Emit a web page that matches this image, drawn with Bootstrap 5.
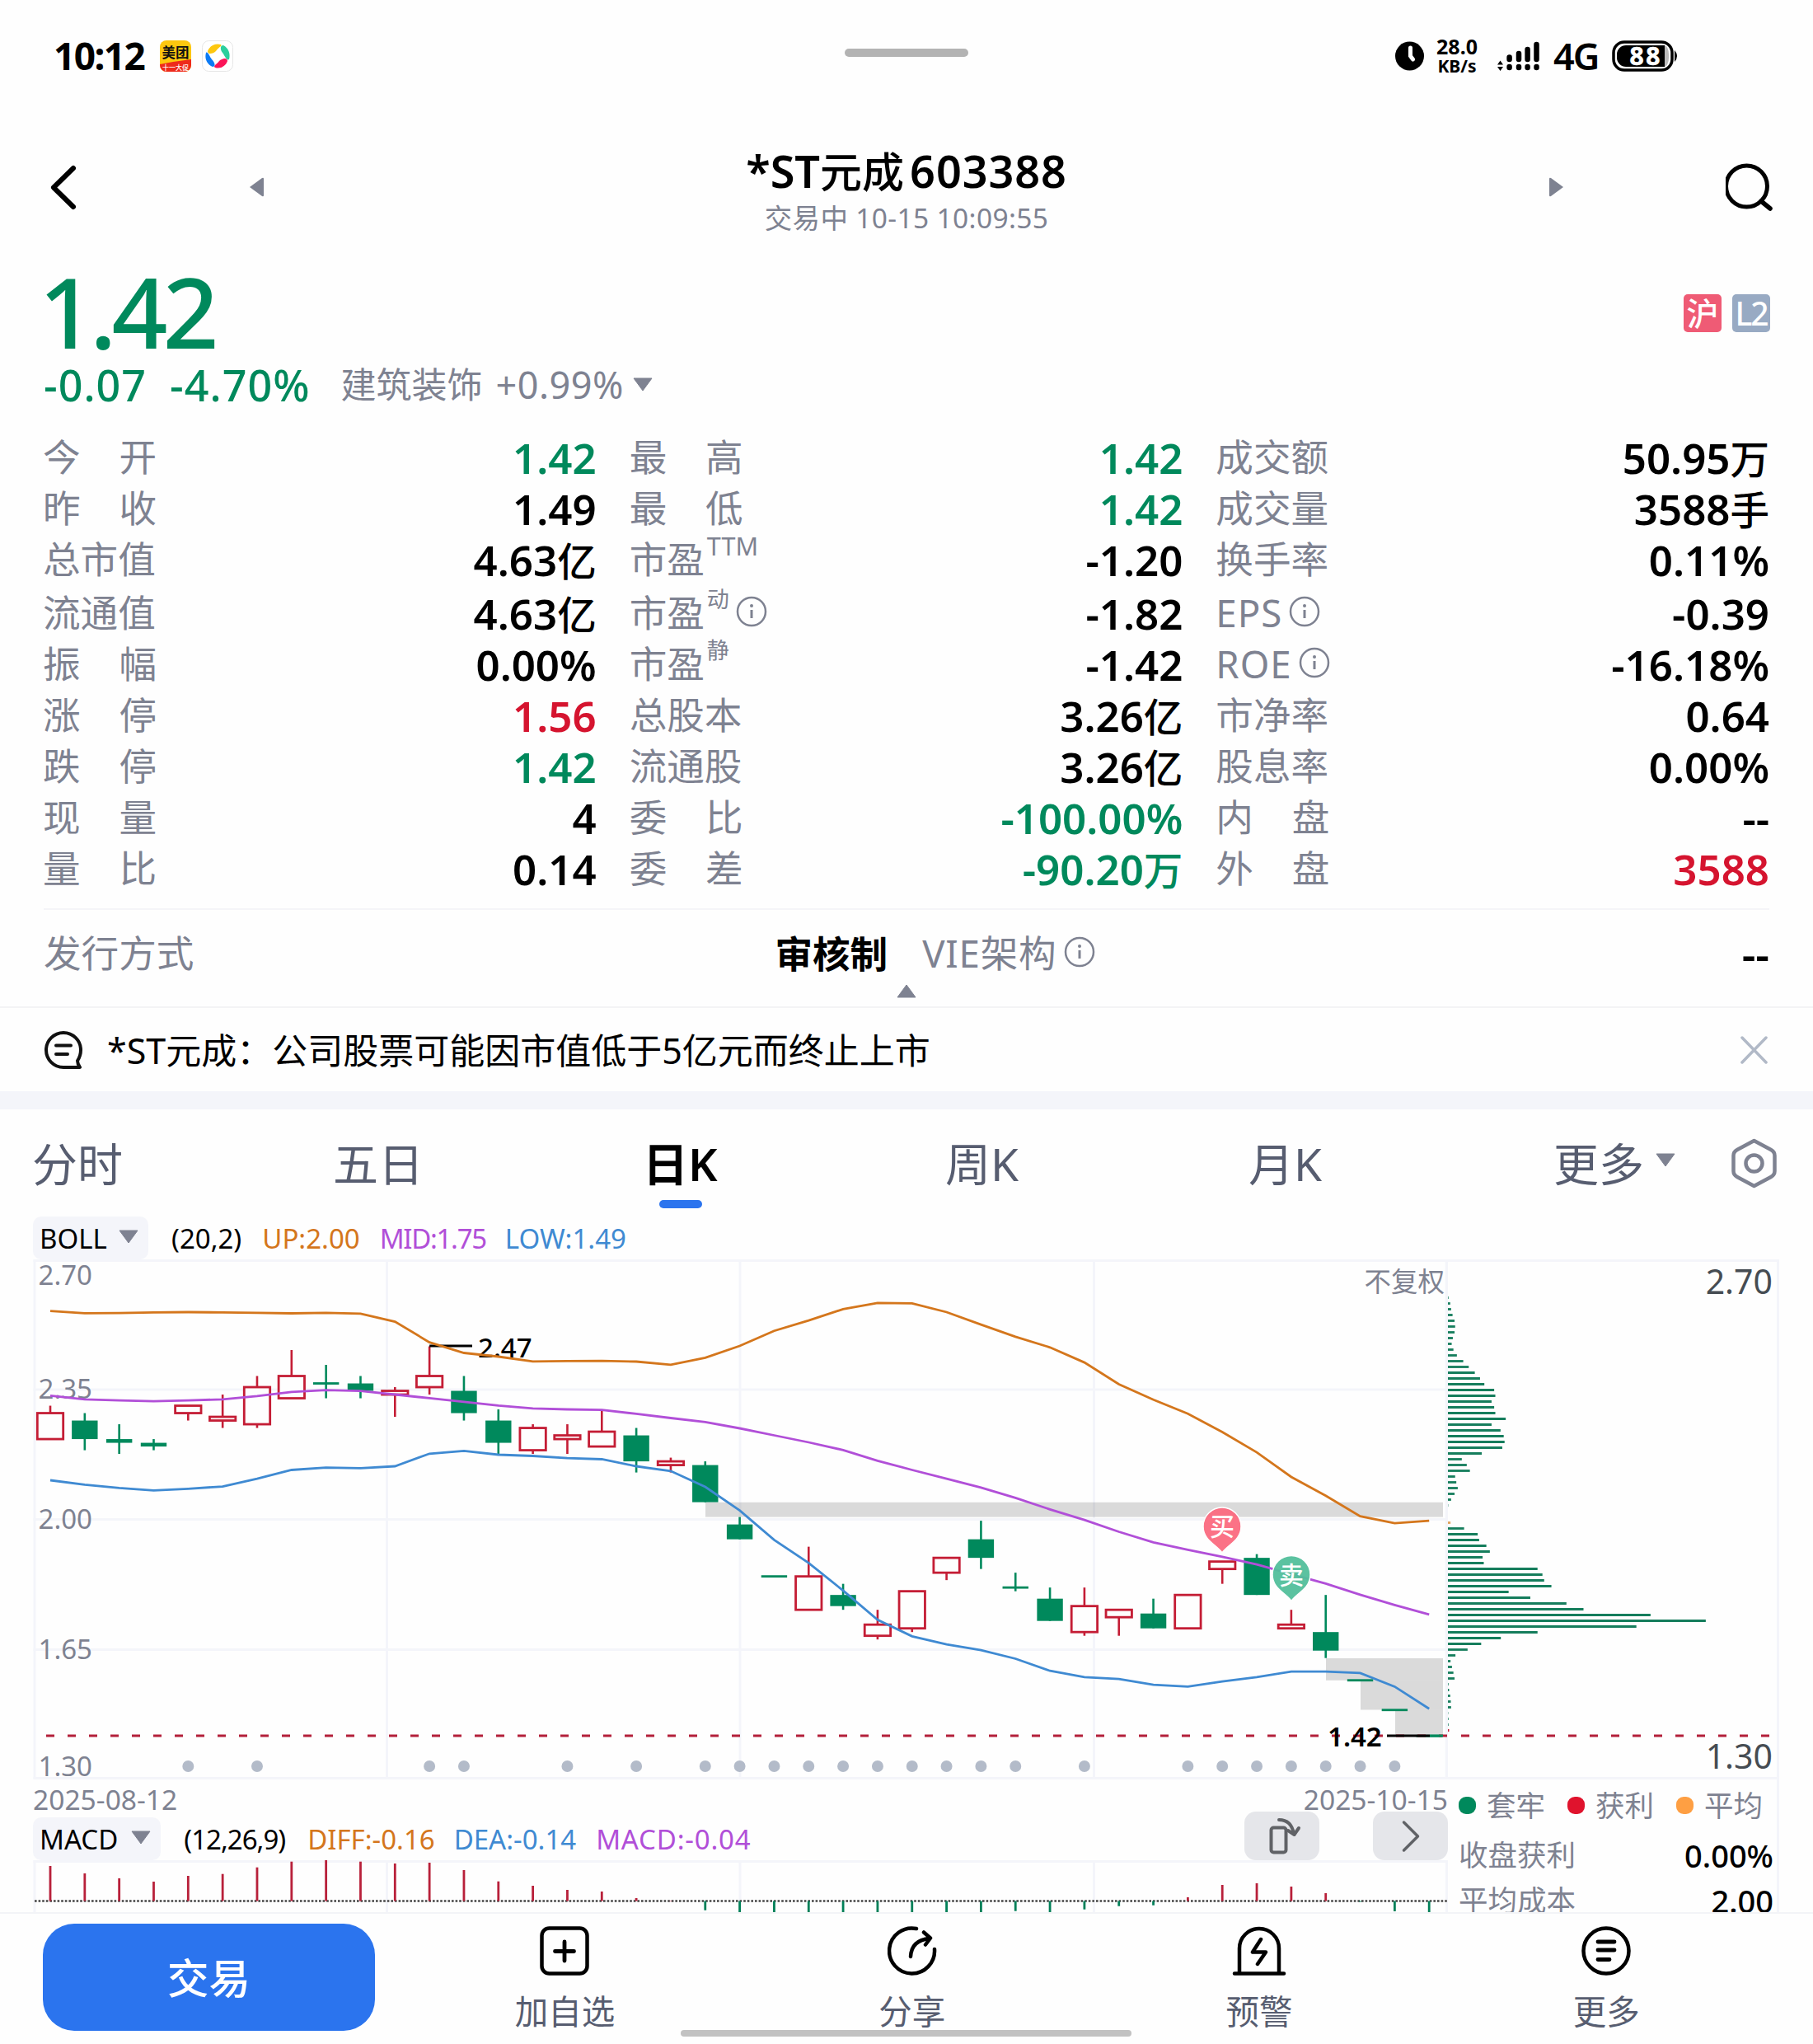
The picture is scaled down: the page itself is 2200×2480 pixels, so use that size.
<!DOCTYPE html>
<html lang="zh-CN">
<head>
<meta charset="utf-8">
<title>*ST元成 603388</title>
<meta name="viewport" content="width=device-width, initial-scale=1">
<link href="https://cdn.jsdelivr.net/npm/bootstrap@5.3.0/dist/css/bootstrap.min.css" rel="stylesheet">
<style>
:root{--gain:#d5142f;--loss:#00895c;--muted:#7e8291;--slate:#575d70;--grid:#f4f5fa}
body{width:2200px;height:2480px;overflow:hidden;background:#fefefe;color:#000;font-family:"Noto Sans","Noto Sans CJK SC",sans-serif;line-height:1}
svg{display:block;flex:none}
.c-muted{color:var(--muted)}.c-loss{color:var(--loss)}.c-gain{color:var(--gain)}.c-slate{color:var(--slate)}
.c-up{color:#d4761c}.c-mid{color:#b14fd8}.c-low{color:#3f8ad2}
.status-bar{height:136px;padding:0 164px 0 65px}
.clock-text{font-size:46px;font-weight:700;letter-spacing:-1.6px;width:129px;padding-bottom:2px}
.grip{width:150px;height:10px;border-radius:5px;background:#b3b3b3;margin-top:-8px}
.side-l{width:960px}.side-r{width:861px}
.net-speed{font-size:25px;font-weight:700;line-height:24px;width:52px;margin-left:14px}
.net-speed .kbs{font-size:21px}
.net-type{font-size:45px;font-weight:600;margin-left:16px;width:55px;letter-spacing:-2px;padding-bottom:2px}
.page-head{height:182px;padding:0 48px 0 55px}
.stock-title{font-size:54px;font-weight:600;line-height:60px;padding-top:4px}
.stock-title .cjk{font-size:51px;font-weight:500}
.stock-title .code{margin-left:7px;letter-spacing:.9px}
.stock-sub{font-size:33.5px;line-height:36px;margin-top:8px;letter-spacing:.35px}
.quote{height:207px;padding:0 52px 0 53px}
.last-price{font-size:119px;font-weight:500;line-height:119px;height:123px;letter-spacing:-6px;margin-left:-6px}
.chg{font-size:52px;font-weight:500;letter-spacing:1px}
.sector{font-size:43px;margin-left:37px}
.sector .pct{font-size:45px;letter-spacing:.5px;margin-left:16px}
.mkt{width:46px;height:46px;border-radius:5px;color:#fff;font-size:39px;font-weight:500;margin-left:13px}
.mkt-sh{background:#ef5b75}.mkt-l2{background:#98aac3;letter-spacing:-2px}
.stats{padding:0 53px;column-gap:41px;height:577px}
.stat-col{flex:1 1 0;min-width:0}
.stat{height:62px;font-size:45.6px}
.stat.tall{height:65px;padding-top:3px}
.stat .lab{padding-bottom:3px;margin-left:-1px}
.stat .val{font-size:51px;font-weight:600;letter-spacing:0;padding-bottom:2px}
.stat .val .cjk{font-size:47.5px;font-weight:500}
.spread{width:138px}
.sup-note{font-size:27px;align-self:flex-start;margin-left:3px;margin-top:-1px}
.sup-note.lat{font-size:30.5px;margin-top:-2px}
.issue{height:119px;margin:0 53px;border-top:2px solid #f5f5f8;font-size:45.6px;padding-bottom:12px}
.issue .mid-col{position:relative;width:400px;margin-left:705px;white-space:nowrap}
.fold{position:absolute;left:148px;top:61px}
.notice{height:103px;border-top:2px solid #f3f3f5;padding:0 54px;font-size:43px}
.band{height:22px;background:#f4f5fa}
.k-tabs{height:130px;padding-left:39px;display:grid;grid-template-columns:365px 376px 367px 368px 370px 215px 60px;align-items:center;font-size:55px;color:var(--slate)}
.k-tabs .on{color:#000;font-weight:600;position:relative}
.k-tabs .on::after{content:"";position:absolute;left:20px;top:72px;width:52px;height:10px;border-radius:5px;background:#2b74ee}
.ind-row{height:52px;font-size:33px}
.ind-row.low{height:59px}
.picker{height:52px;background:#f4f5fa;border-radius:10px;padding:0 12px 0 8px}
.picker svg{margin-top:-4px}
.plot-l{width:1717px;margin-left:40px}
.plot-r{width:402px}
.dates{height:38px;font-size:33.6px;padding-top:7px}
.tool{width:91px;height:59px;border-radius:14px;background:#e5e6ea}
.cost{height:160px;border-right:3px solid var(--grid);padding:0 4px 0 13px;overflow:hidden;font-size:35.5px}
.cost .fig{color:#000;font-size:38px;font-weight:500}
.cost .ln{flex:none}
.pip{width:21px;height:21px;border-radius:9px;margin-right:13px}
.dock{height:161px;border-top:2px solid #f3f4f7;position:relative;padding:12px 40px 0 52px}
.trade{width:403px;height:130px;border-radius:38px;background:#2b74ee;color:#fff;font-size:50.5px;font-weight:500;border:0;padding:2px 0 0;margin-right:20px}
.dock-item{width:421.5px;font-size:40.5px;color:var(--slate)}
.dock-item span{margin-top:24px}
.home-bar{position:absolute;left:826px;top:141px;width:547px;height:8px;border-radius:4px;background:#c2c2c2}
</style>
</head>
<body>
<header class="status-bar d-flex align-items-center">
  <div class="side-l d-flex align-items-center">
    <span class="clock-text">10:12</span>
    <svg width="38" height="38" viewBox="0 0 38 38"><rect width="38" height="38" rx="8" fill="#fdc70f"/><path d="M0 29 L16 26 L38 23 V30 A8 8 0 0 1 30 38 H8 A8 8 0 0 1 0 30Z" fill="#ee2a1b"/><text x="19" y="21" font-size="16.5" font-weight="700" text-anchor="middle" fill="#111">美团</text><text x="19" y="35.500" font-size="8" font-weight="500" text-anchor="middle" fill="#fff">十一大促</text></svg>
    <svg class="ms-2" width="50" height="38" viewBox="-5 0 50 38"><rect x=".5" y=".5" width="37" height="37" rx="8" fill="#fff" stroke="#e6e6e6"/><path d="M7 13C9 7 16 3 23 5C25 7 20 8 17 13C14 16 7 18 7 13Z" fill="#fdc70f"/><path d="M26 6C32 9 35 16 33 23C30 25 28 19 25 15C22 11 22 6 26 6Z" fill="#2ccf9c"/><path d="M31 25C29 31 23 35 16 33C13 31 18 29 21 25C24 22 31 20 31 25Z" fill="#fb1558"/><path d="M13 32C6 29 3 22 5 15C7 13 9 19 12 23C16 27 17 32 13 32Z" fill="#0d7bf5"/></svg>
  </div>
  <div class="grip"></div>
  <div class="side-r d-flex align-items-center justify-content-end">
    <svg width="35" height="36" viewBox="0 0 35 36"><circle cx="17.5" cy="18" r="17.5"/><path d="M18.500 8V18L21.500 22" fill="none" stroke="#fff" stroke-width="5" stroke-linecap="round"/></svg>
    <div class="net-speed text-center"><div>28.0</div><div class="kbs">KB/s</div></div>
    <svg style="margin-left:23px" width="52" height="38" viewBox="1817 49 52 38"><path d="M1820.500 73.500L1824 78.500H1817ZM1820.500 86L1824 81H1817Z"/><path d="M1831.6 69.500V72M1843 65V72M1853.6 60V72M1864.500 54V72M1831.600 81V82M1843 81V82M1853.600 81V82M1864.500 81V82" stroke="#000" stroke-width="6.500" stroke-linecap="round"/></svg>
    <span class="net-type">4G</span>
    <svg style="margin-left:16px" width="80" height="38" viewBox="1956 49 80 38"><rect x="1958" y="51" width="71" height="34" rx="13" fill="#fff" stroke="#000" stroke-width="3.500"/><path d="M1973 55H2020V81H1973A11 11 0 0 1 1962 70V66A11 11 0 0 1 1973 55Z"/><path d="M2020 55A6 11 0 0 1 2025 66V70A6 11 0 0 1 2020 81Z" fill="#bbb"/><path d="M2032 61Q2038 68 2032 75Z"/><text x="1996" y="78.500" font-size="30" font-weight="700" fill="#fff" stroke="#fff" stroke-width=".6" text-anchor="middle" textLength="37">88</text></svg>
  </div>
</header>

<nav class="page-head d-flex justify-content-between align-items-center">
  <div class="d-flex align-items-center">
    <svg width="44" height="64" viewBox="55 195 44 64"><path d="M89 204L65 227.500L89 251" fill="none" stroke="#000" stroke-width="6" stroke-linecap="round" stroke-linejoin="round"/></svg>
    <svg style="margin-left:204px" width="17" height="24"><path d="M0 12L15 1Q17 0 17 2V22Q17 24 15 23Z" fill="#7e8291"/></svg>
  </div>
  <div class="text-center">
    <div class="stock-title">*ST<span class="cjk">元成</span><span class="code">603388</span></div>
    <div class="stock-sub c-muted">交易中 10-15 10:09:55</div>
  </div>
  <div class="d-flex align-items-center">
    <svg style="margin-right:197px" width="17" height="24"><path d="M17 12L2 1Q0 0 0 2V22Q0 24 2 23Z" fill="#7e8291"/></svg>
    <svg width="58" height="58" viewBox="2094 198 58 58"><circle cx="2119.500" cy="226" r="25" fill="none" stroke="#000" stroke-width="5"/><path d="M2137 244L2148 253" stroke="#000" stroke-width="5.500" stroke-linecap="round"/></svg>
  </div>
</nav>

<section class="quote">
  <div class="d-flex justify-content-between align-items-center">
    <div class="last-price c-loss">1.42</div>
    <div class="d-flex"><div class="mkt mkt-sh d-flex align-items-center justify-content-center">沪</div><div class="mkt mkt-l2 d-flex align-items-center justify-content-center">L2</div></div>
  </div>
  <div class="d-flex align-items-center" style="height:51px">
    <span class="chg c-loss">-0.07</span><span class="chg c-loss ms-4 ps-1">-4.70%</span>
    <span class="sector c-muted d-flex align-items-center">建筑装饰<span class="pct">+0.99%</span></span>
    <svg style="margin-left:11px" width="24" height="17"><path d="M1 1H23L12 16Z" fill="#7e8291" stroke="#7e8291" stroke-linejoin="round"/></svg>
  </div>
</section>

<section class="stats d-flex" id="stats"></section>

<section class="issue d-flex align-items-center">
  <span class="c-muted">发行方式</span>
  <div class="mid-col d-flex align-items-center"><b style="font-weight:700;padding-top:2px">审核制</b><span class="c-muted" style="margin-left:42px;letter-spacing:.8px">VIE架构</span><svg style="margin:-4px 0 0 8px" width="38" height="38" viewBox="0 0 38 38"><use href="#info"/></svg>
    <svg class="fold" width="24" height="17"><path d="M12 1L23 16H1Z" fill="#7e8291" stroke="#7e8291" stroke-linejoin="round"/></svg></div>
  <span class="ms-auto" style="font-size:52px;font-weight:600">--</span>
</section>

<section class="notice d-flex align-items-center">
  <svg width="46" height="48" viewBox="0 0 46 48"><path d="M43 45H23A21 21 0 1 1 44 24Q44 31 40 37Q40 41 43 45Z" fill="none" stroke="#111" stroke-width="4" stroke-linejoin="round"/><path d="M14 18.500H32M14 29H28" stroke="#111" stroke-width="4" stroke-linecap="round"/></svg>
  <span style="margin-left:30px;padding-top:1px">*ST元成：公司股票可能因市值低于5亿元而终止上市</span>
  <svg class="ms-auto" width="34" height="34"><path d="M2 2L31 32M31 2L2 32" stroke="#b1b9c7" stroke-width="3.500" stroke-linecap="round"/></svg>
</section>
<div class="band"></div>

<nav class="k-tabs">
  <span>分时</span><span>五日</span><span class="on">日K</span><span>周K</span><span>月K</span>
  <span class="d-flex align-items-center">更多<svg style="margin:-8px 0 0 14px" width="24" height="17"><path d="M1 1H23L12 16Z" fill="#7e8291" stroke="#7e8291" stroke-linejoin="round"/></svg></span>
  <svg width="58" height="62" viewBox="2100 1380 58 62"><path d="M2128.500 1384L2149 1395Q2153.500 1397.500 2153.500 1402V1421Q2153.500 1425.500 2149 1428L2128.500 1439L2108 1428Q2103.500 1425.500 2103.500 1421V1402Q2103.500 1397.500 2108 1395Z" fill="none" stroke="#7e8291" stroke-width="4.500" stroke-linejoin="round"/><circle cx="2128.500" cy="1411.500" r="10" fill="none" stroke="#7e8291" stroke-width="4.500"/></svg>
</nav>

<main class="d-flex align-items-end">
  <div class="plot-l">
    <div class="ind-row d-flex align-items-center">
      <div class="picker d-flex align-items-center" style="width:140px">BOLL<svg style="margin-left:14px" width="24" height="17"><path d="M1 1H23L12 16Z" fill="#7e8291" stroke="#7e8291" stroke-linejoin="round"/></svg></div>
      <span style="margin-left:28px">(20,2)</span><span class="c-up" style="margin-left:25px">UP:2.00</span><span class="c-mid" style="margin-left:24px;letter-spacing:-1.3px">MID:1.75</span><span class="c-low" style="margin-left:23px">LOW:1.49</span>
    </div>
    <svg id="kline" width="1717" height="632" viewBox="40 1528 1717 632"></svg>
    <div class="dates d-flex justify-content-between c-muted"><span>2025-08-12</span><span>2025-10-15</span></div>
    <div class="ind-row low d-flex align-items-end">
      <div class="picker d-flex align-items-center">MACD<svg class="ms-3" width="24" height="17"><path d="M1 1H23L12 16Z" fill="#7e8291" stroke="#7e8291" stroke-linejoin="round"/></svg></div>
      <div class="d-flex align-items-center" style="height:52px"><span style="margin-left:28px;letter-spacing:-1px">(12,26,9)</span><span class="c-up" style="margin-left:27px">DIFF:-0.16</span><span class="c-low" style="margin-left:23px">DEA:-0.14</span><span class="c-mid" style="margin-left:24px;letter-spacing:.8px">MACD:-0.04</span></div>
      <div class="tool ms-auto"><svg width="91" height="59" viewBox="1510 2198 91 59"><g fill="none" stroke="#606266" stroke-width="4" stroke-linecap="round" stroke-linejoin="round"><rect x="1542.500" y="2217.500" width="18" height="30" rx="3"/><path d="M1552 2208Q1567 2208 1570 2225M1563 2221L1570.500 2226L1576 2218"/></g></svg></div>
      <div class="tool" style="margin-left:65px"><svg width="91" height="59" viewBox="1666 2198 91 59"><path d="M1703.500 2211L1720.500 2228L1703.500 2245" fill="none" stroke="#606266" stroke-width="3.500" stroke-linecap="round" stroke-linejoin="round"/></svg></div>
    </div>
    <svg id="macd" width="1717" height="63" viewBox="40 2257 1717 63"></svg>
  </div>
  <div class="plot-r">
    <svg id="chips" width="402" height="632" viewBox="1757 1528 402 632"></svg>
    <div class="cost d-flex flex-column c-muted">
      <div class="ln d-flex align-items-center" style="height:61px"><i class="pip" style="background:#00895c"></i>套牢<i class="pip" style="background:#e0132d;margin-left:27px"></i>获利<i class="pip" style="background:#fe9f43;margin-left:27px"></i>平均</div>
      <div class="ln d-flex align-items-center justify-content-between" style="height:60px"><span>收盘获利</span><span class="fig">0.00%</span></div>
      <div class="ln d-flex align-items-center justify-content-between" style="height:49px"><span>平均成本</span><span class="fig">2.00</span></div>
    </div>
  </div>
</main>

<footer class="dock d-flex align-items-start">
  <button class="trade btn">交易</button>
  <div class="dock-item d-flex flex-column align-items-center"><svg style="margin-top:3px" width="60" height="60" viewBox="0 0 60 60"><rect x="2.500" y="2.500" width="55" height="55" rx="9" fill="none" stroke="#000" stroke-width="4.500"/><path d="M30 19V42M18.500 30.500H41.500" stroke="#000" stroke-width="4.800" stroke-linecap="round"/></svg><span>加自选</span></div>
  <div class="dock-item d-flex flex-column align-items-center"><svg style="margin-top:3px" width="60" height="60" viewBox="0 0 60 60"><path d="M35 3A27.500 27.500 0 1 0 57 28M28 37Q29 17 51 15M44 7.500L52 14.500L46 22.500" fill="none" stroke="#000" stroke-width="4.500" stroke-linecap="round" stroke-linejoin="round"/></svg><span>分享</span></div>
  <div class="dock-item d-flex flex-column align-items-center"><svg style="margin-top:3px" width="66" height="60" viewBox="0 0 66 60"><path d="M9 56V27A24 24 0 0 1 57 27V56M3 57.500H63" fill="none" stroke="#000" stroke-width="4.500" stroke-linecap="round"/><path d="M35 16L25 31.500H41L31 46" fill="none" stroke="#000" stroke-width="4.500" stroke-linecap="round" stroke-linejoin="round"/></svg><span>预警</span></div>
  <div class="dock-item d-flex flex-column align-items-center"><svg style="margin-top:3px" width="60" height="60" viewBox="0 0 60 60"><circle cx="30" cy="30" r="27.500" fill="none" stroke="#000" stroke-width="4.500"/><path d="M20 19H40M20 29H40M20 40.500H34" stroke="#000" stroke-width="4.800" stroke-linecap="round"/></svg><span>更多</span></div>
  <div class="home-bar"></div>
</footer>

<svg width="0" height="0" class="position-absolute"><defs><g id="info"><circle cx="19" cy="19" r="17" fill="none" stroke="#7e8291" stroke-width="2.500"/><path d="M19 17V27" stroke="#7e8291" stroke-width="3"/><circle cx="19" cy="12" r="2" fill="#7e8291"/></g></defs></svg>

<script src="https://cdn.jsdelivr.net/npm/bootstrap@5.3.0/dist/js/bootstrap.bundle.min.js"></script>
<script>
// label | note | info icon | value | tone
const stats = [
  [['今 开','','','1.42','loss'],['昨 收','','','1.49'],['总市值','','','4.63亿'],['流通值','','','4.63亿'],['振 幅','','','0.00%'],['涨 停','','','1.56','gain'],['跌 停','','','1.42','loss'],['现 量','','','4'],['量 比','','','0.14']],
  [['最 高','','','1.42','loss'],['最 低','','','1.42','loss'],['市盈','TTM','','-1.20'],['市盈','动',1,'-1.82'],['市盈','静','','-1.42'],['总股本','','','3.26亿'],['流通股','','','3.26亿'],['委 比','','','-100.00%','loss'],['委 差','','','-90.20万','loss']],
  [['成交额','','','50.95万'],['成交量','','','3588手'],['换手率','','','0.11%'],['EPS','',1,'-0.39'],['ROE','',1,'-16.18%'],['市净率','','','0.64'],['股息率','','','0.00%'],['内 盘','','','--'],['外 盘','','','3588','gain']]
];
document.getElementById('stats').innerHTML = stats.map(col => '<div class="stat-col">' + col.map((r, i) => {
  const lab = r[0].includes(' ') ? `<span class="spread d-flex justify-content-between">${r[0].split(' ').map(c => `<span>${c}</span>`).join('')}</span>` : `<span${/[A-Z]/.test(r[0]) ? ' style="letter-spacing:1px"' : ''}>${r[0]}</span>`;
  const note = r[1] ? `<span class="sup-note${r[1] === 'TTM' ? ' lat' : ''}">${r[1]}</span>` : '';
  const info = r[2] ? `<svg style="margin:-4px 0 0 8px" width="38" height="38"><use href="#info"/></svg>` : '';
  const val = r[3].replace(/[亿万手]/, m => `<span class="cjk">${m}</span>`);
  return `<div class="stat d-flex align-items-center${i === 3 ? ' tall' : ''}"><div class="lab c-muted d-flex align-items-center h-100">${lab}${note}${info}</div><span class="val ms-auto ${r[4] ? 'c-' + r[4] : ''}">${val}</span></div>`;
}).join('') + '</div>').join('');

const X = i => 61 + 41.83 * i;
const Y = c => 1633.5 + (247 - c) * 4.5025;      // price in cents
const Z = v => 1500 + v / 2.24;                  // indicator curve units
const RED = '#c41d35', GREEN = '#00895c';
const line = (x1, y1, x2, y2, s, w, extra = '') => `<line x1="${x1}" y1="${y1}" x2="${x2}" y2="${y2}" stroke="${s}" stroke-width="${w}" ${extra}/>`;
const txt = (x, y, t, size, fill, extra = '') => `<text x="${x}" y="${y}" font-size="${size}" fill="${fill}" ${extra}>${t}</text>`;

// up/down, high, body top, body bottom, low
const candles = [['r',231,229,222,222],['g',229,227,222,219],['g',226,222,221,218],['g',222,221,220,219],['r',231,231,229,227],['r',234,228,227,225],['r',239,236,226,225],['r',246,239,233,233],['g',242,237,237,233],['g',239,237,235,233],['r',236,235,234,228],['r',247,239,236,234],['g',239,235,229,227],['g',230,227,221,218],['r',226,225,219,218],['r',226,223,222,218],['r',230,224,220,220],['g',225,223,216,213],['r',217,216,215,213],['g',216,215,205,205],['g',201,199,195,195],['g',185,185,185,185],['r',193,185,176,176],['g',183,180,177,176],['r',176,172,169,168],['r',181,181,171,170],['r',190,190,186,184],['g',200,195,190,187],['g',186,182,182,181],['g',182,179,173,173],['r',182,177,170,169],['r',176,176,174,169],['g',179,175,171,171],['r',180,180,171,171],['r',189,189,187,183],['g',191,190,180,180],['r',176,172,171,171],['g',180,170,165,163],['g',157,157,157,157],['g',149,149,149,149],['g',142,142,142,142]];
const up = [203,209,208.5,207,206,207,208,209.5,208,210,232,288,317,327,340,339,338.5,340.5,349,330,298,257,229,198,181,182,206,240,273,302,343,402,444,482,532,587,654,705,761,780,773];
const mid = [433,443,446,448.5,446,443,434,423,418,420.5,430,440,450,460,468,470.5,472,482.5,494,505,522,541,560,581,610,635,659,683,711,742,771,803,832,852,871,892,918,944,974,1002,1028];
const low = [663,675,684,690.5,686,680,659,635,628.5,630,625,591,583,593.5,597,603,606,625,638,681,745,825,888,963,1042,1087,1109,1125,1148,1181,1198,1203,1219,1224,1210,1198,1183,1183,1187,1224,1284];
const events = [4,6,11,12,15,17,19,20,21,22,23,24,25,26,27,28,30,33,34,35,36,37,38,39];
const curve = (a, s) => `<polyline points="${a.map((v, i) => X(i).toFixed(1) + ',' + Z(v).toFixed(1)).join(' ')}" fill="none" stroke="${s}" stroke-width="2.8"/>`;
const pin = (x, y, c, t) => `<path d="M${x} ${y + 55}C${x - 7} ${y + 45} ${x - 23} ${y + 40} ${x - 23} ${y + 23}A23 23 0 0 1 ${x + 23} ${y + 23}C${x + 23} ${y + 40} ${x + 7} ${y + 45} ${x} ${y + 55}Z" fill="${c}" fill-opacity=".95" stroke="#fff" stroke-width="1.5"/>` + txt(x, y + 34, t, 30, '#fff', 'text-anchor="middle" font-weight="500"');

let k = '';
[1529.5,1686,1843.5,2001.5,2157.5].forEach(y => k += line(40.5, y, 1757, y, '#f4f5fa', 3));
[42,469.5,898,1327.5].forEach(x => k += line(x, 1528, x, 2159, '#f4f5fa', 3));
k += line(1755.5, 1528, 1755.5, 2159, '#f4f5fa', 3.5);
[[2.70,1559],[2.35,1696.5],[2.00,1855],[1.65,2012.5],[1.30,2155]].forEach(a => k += txt(46.5, a[1], a[0].toFixed(2), 33, '#7e8291'));
k += txt(1753, 1566.5, '不复权', 32.5, '#7e8291', 'text-anchor="end"');
k += '<g fill="#000" fill-opacity=".14">' + [[856,1822.8,17.8],[1609,2012,26.8],[1651,2038.8,35.7],[1693,2074.5,31.5]].map(b => `<rect x="${b[0]}" y="${b[1]}" width="${1751 - b[0]}" height="${b[2]}"/>`).join('') + '</g>';
events.forEach(i => k += `<circle cx="${X(i)}" cy="2143" r="7" fill="#b3bbc9"/>`);
candles.forEach((c, i) => {
  const x = X(i), a = Y(c[2]), b = Y(c[3]);
  if (c[0] === 'r') {
    if (c[1] > c[2]) k += line(x, Y(c[1]), x, a, RED, 2.6);
    if (c[4] < c[3]) k += line(x, b, x, Y(c[4]), RED, 2.6);
    k += `<rect x="${x - 15.7}" y="${a}" width="31.400" height="${b - a}" fill="#fefefe" stroke="${RED}" stroke-width="2.800"/>`;
  } else {
    k += line(x, Y(c[1]), x, Y(c[4]), GREEN, 2.6);
    k += `<rect x="${x - 15.7}" y="${a - (b - a < 2 ? 1.4 : 0)}" width="31.400" height="${Math.max(b - a, 2.8)}" fill="${GREEN}"/>`;
  }
});
k += line(X(11), 1633, 573, 1633, '#000', 2.8) + txt(580, 1646.5, '2.47', 33, '#000', 'font-weight="500"');
k += line(56, 2106, 1757, 2106, '#b3203a', 2.8, 'stroke-dasharray="10 16"');
k += curve(up, '#d4761c') + curve(mid, '#b14fd8') + curve(low, '#3f8ad2');
k += line(1735, 2106, 1751, 2106, '#00895c', 3) + line(1683, 2106, 1735, 2106, '#000', 3) + txt(1611, 2119, '1.42', 33, '#000', 'font-weight="600"');
k += pin(1483, 1829, '#fb6a80', '买') + pin(1567, 1887.5, '#52bf9b', '卖');
document.getElementById('kline').innerHTML = k;

// cost distribution, one bar every 7px
const ends = [307,313,316,321,328,330,328,322,318,324,336,358,377,398,416,431,465,469,456,465,469,505,456,487,498,501,493,422,353,370,381,330,334,339,328,316,306,305,305,314,361,408,413,438,450,425,429,615,632,638,663,515,590,715,774,1006,1197,957,615,488,420,373,331,314,319,324,328,307,309,313,315,316,306,307,307,309];
let h = line(1757, 1529.5, 2159, 1529.5, '#f4f5fa', 3) + line(1757, 2157.5, 2159, 2157.5, '#f4f5fa', 3) + line(2157.5, 1528, 2157.5, 2160, '#f4f5fa', 3);
ends.forEach((e, i) => h += line(1757, 1574.5 + 7 * i, 1757 + (e - 305) / 2.851, 1574.5 + 7 * i, i === 39 ? '#e0a25c' : i === 75 ? '#c41d35' : '#157d5c', 2.8));
h += line(1773, 2106, 2148, 2106, '#b3203a', 2.8, 'stroke-dasharray="10 16"');
h += txt(2151, 1570, '2.70', 41, '#464c52', 'text-anchor="end"') + txt(2151, 2146, '1.30', 41, '#464c52', 'text-anchor="end"');
document.getElementById('chips').innerHTML = h;

const bars = [2264,2273,2279,2283,2276,2273.7,2265.7,2258.7,2257,2258.7,2261,2260,2269,2282.7,2288,2293,2295,2303,2306,2317.7,2320,2320,2320,2320,2320,2320,2320,2320,2318.7,2320,2316.7,2312.7,2311.7,2302,2287,2285,2289,2297,2307.5,2319,2320];
let m = line(40.5, 2258.5, 1757, 2258.5, '#f4f5fa', 3);
[42,469.5,898,1327.5,1755.5].forEach(x => m += line(x, 2257, x, 2320, '#f4f5fa', 3));
m += line(42, 2306.5, 1757, 2306.5, '#444', 2.4, 'stroke-dasharray="2.6 2"');
bars.forEach((b, i) => m += line(X(i), 2306.5, X(i), b, b < 2306.5 ? '#b8203a' : '#008058', 2.8));
document.getElementById('macd').innerHTML = m;
</script>
</body>
</html>
